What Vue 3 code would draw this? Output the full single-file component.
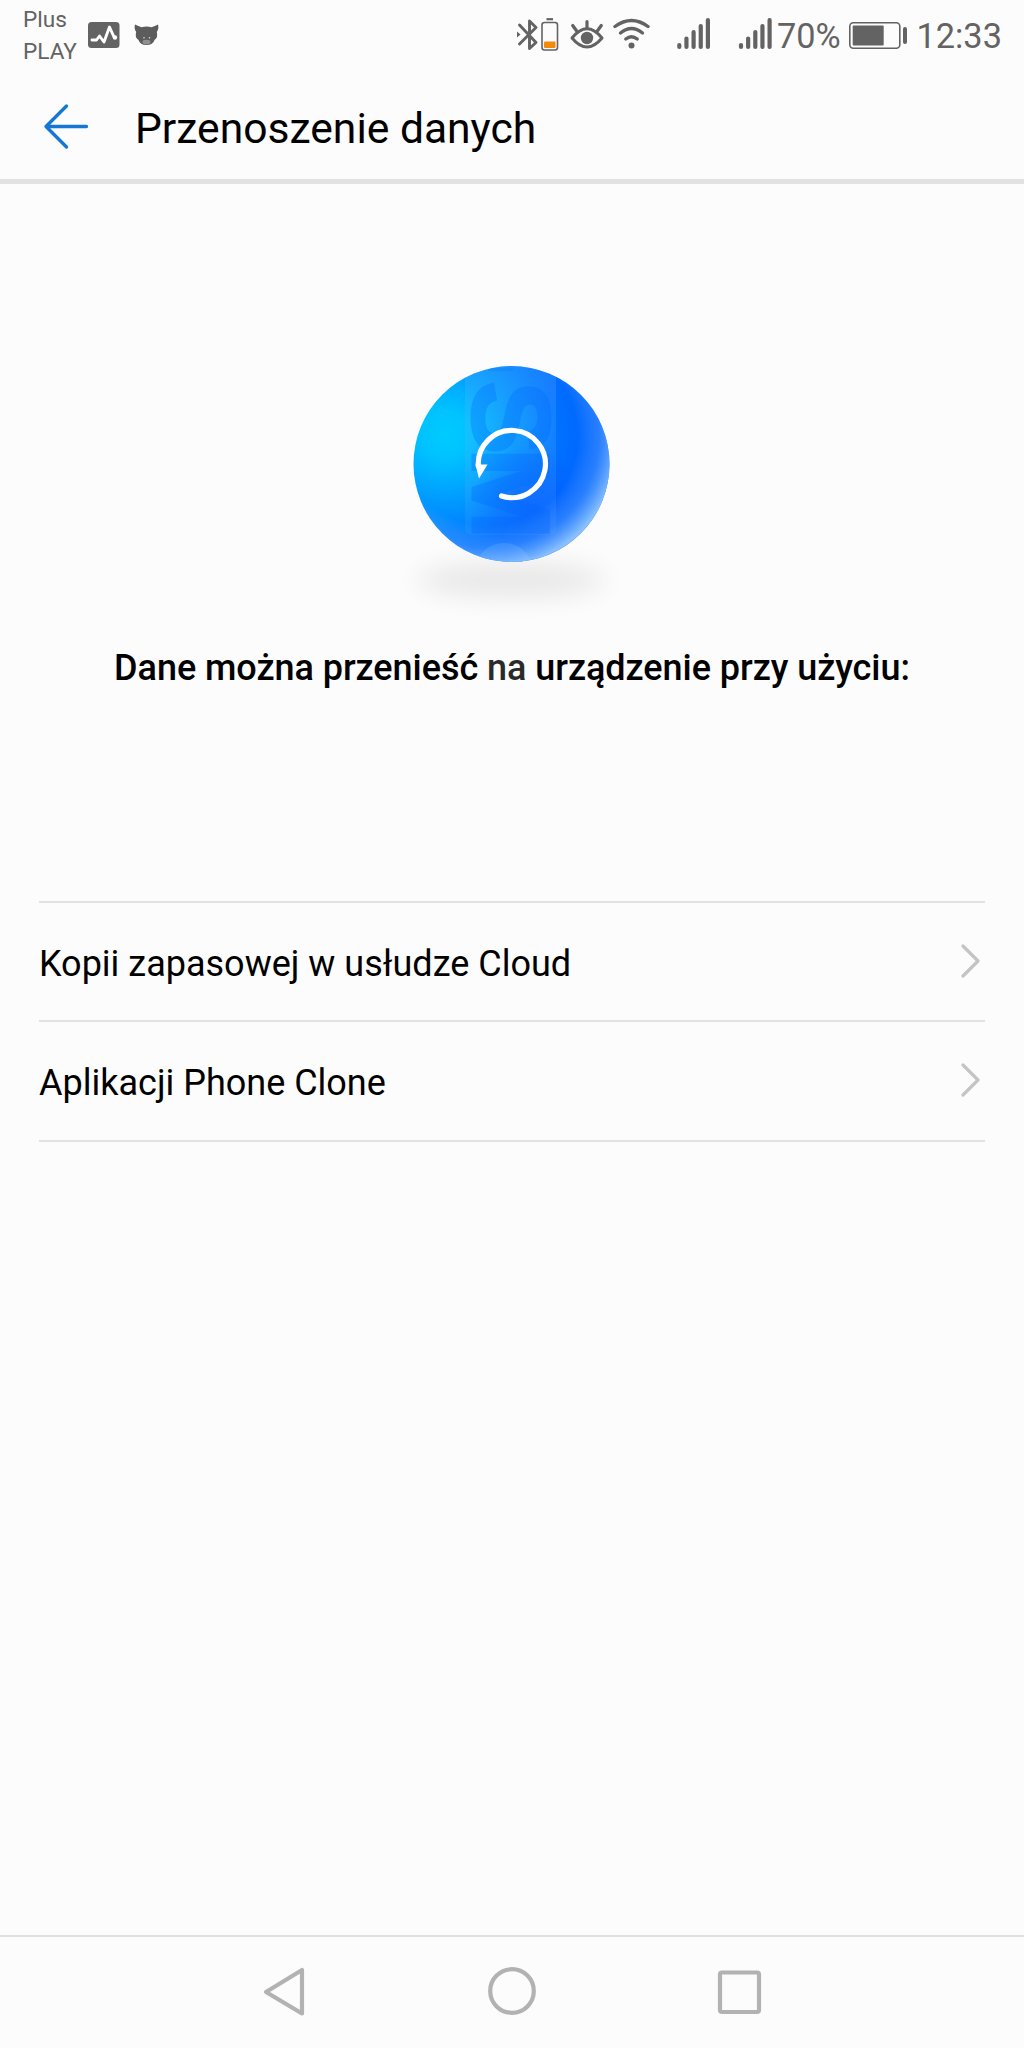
<template>
  <div class="screen">
    <!-- Status bar -->
    <div class="status-bar">
      <div class="carriers">
        <span>Plus</span>
        <span>PLAY</span>
      </div>
      <svg class="notifications" width="76" height="36" viewBox="86 16 76 36">
        <rect x="88" y="22" width="31.5" height="26" rx="3.5" fill="#636363" />
        <path
          d="M92 40h4.500l3-4 4.500 6 5.500-15 4.500 10"
          fill="none"
          stroke="#fff"
          stroke-width="2.900"
          stroke-linecap="round"
          stroke-linejoin="round"
        />
        <circle cx="115" cy="37.500" r="2.200" fill="#fff" />
        <path
          d="M135 24.500q3.500 1.800 6.500 2.800 5-1.400 10 0 3.500-1 6.500-2.800 1.200 4-1.200 7.500 1.500 5-2.300 8-1.500 5-8 5-6.500 0-8-5-4-3-2.300-8-2.400-3.500-1.200-7.500z"
          fill="#5c5c5c"
        />
        <ellipse cx="146.500" cy="42" rx="4" ry="2.300" fill="#909090" />
        <path d="M144 37v1.500M149.500 37v1.500" stroke="#ccc" stroke-width="1.300" />
      </svg>

      <div class="indicators">
        <svg width="258" height="40" viewBox="514 14 258 40" fill="none" stroke="#636363">
          <!-- Bluetooth -->
          <path
            d="M519.500 25L536 42.500 529.500 48.500V21L536 27.500 519.500 44"
            stroke-width="2.900"
            stroke-linecap="round"
            stroke-linejoin="round"
          />
          <path d="M517 31.500l3.500 3-3.500 3z" fill="#636363" stroke="none" />
          <!-- Accessory battery -->
          <rect x="542" y="22.500" width="15.500" height="27.500" rx="2.500" stroke-width="1.600" />
          <path d="M546.500 19.200h6.500" stroke-width="2.200" />
          <rect x="544" y="41.500" width="11.500" height="6.500" rx="1" fill="#f28a0c" stroke="none" />
          <!-- Eye comfort -->
          <path d="M572 38q15-18.500 30 0-15 18-30 0z" stroke-width="3" stroke-linejoin="round" />
          <circle cx="587" cy="38" r="6.200" fill="#636363" stroke="none" />
          <path
            d="M587 21.500v6M572.700 25.500l3.800 5.300M601.300 25.500l-3.800 5.300"
            stroke-width="3.200"
            stroke-linecap="round"
          />
          <!-- Wi-Fi -->
          <g stroke-width="3.400" stroke-linecap="round">
            <path d="M615 26.500q16.500-12 33 0" />
            <path d="M620.500 33q11-9 22 0" />
            <path d="M625.800 39q5.700-4.600 11.400 0" />
          </g>
          <circle cx="631.500" cy="45.500" r="3" fill="#636363" stroke="none" />
          <!-- Mobile signal -->
          <g v-for="x in signals" :key="x" stroke-width="4.200" stroke-linecap="round">
            <path
              v-for="(top, i) in signalTops"
              :key="i"
              :d="`M${x + i * 7.15} ${top}V47`"
            />
          </g>
        </svg>
        <span class="percent">70%</span>
        <svg class="battery" width="60" height="30" viewBox="848 20 60 30">
          <rect
            x="849.800"
            y="22.800"
            width="50"
            height="25.500"
            rx="3.500"
            fill="none"
            stroke="#636363"
            stroke-width="1.600"
          />
          <rect x="852.700" y="25.500" width="31" height="20" rx="1" fill="#636363" />
          <path d="M905 29v13" stroke="#636363" stroke-width="4" stroke-linecap="round" />
        </svg>
        <span class="clock">12:33</span>
      </div>
    </div>

    <!-- Header -->
    <header class="header">
      <button class="back-btn" aria-label="Wstecz">
        <svg
          width="48"
          height="48"
          viewBox="0 0 48 48"
          fill="none"
          stroke="#1577d4"
          stroke-width="3.300"
          stroke-linecap="round"
          stroke-linejoin="round"
        >
          <path d="M24.500 4L4 24.500l20.500 20.500M4 24.500h40.500" />
        </svg>
      </button>
      <h1>Przenoszenie danych</h1>
    </header>

    <!-- Illustration -->
    <main class="content">
      <svg class="ball" width="260" height="280" viewBox="380 340 260 280">
        <defs>
          <radialGradient id="base" gradientUnits="userSpaceOnUse" cx="445" cy="434" r="155">
            <stop offset="0" stop-color="#00cbff" />
            <stop offset="0.160" stop-color="#00c2ff" />
            <stop offset="0.450" stop-color="#0098ff" />
            <stop offset="0.740" stop-color="#0070ff" />
            <stop offset="1" stop-color="#0062ff" />
          </radialGradient>
          <radialGradient id="deep" gradientUnits="userSpaceOnUse" cx="532" cy="506" r="62">
            <stop offset="0" stop-color="#005cff" stop-opacity="0.850" />
            <stop offset="1" stop-color="#005cff" stop-opacity="0" />
          </radialGradient>
          <radialGradient id="rim" gradientUnits="userSpaceOnUse" cx="488" cy="436" r="132">
            <stop offset="0.680" stop-color="#78b4ff" stop-opacity="0" />
            <stop offset="0.840" stop-color="#62a8ff" stop-opacity="0.400" />
            <stop offset="1" stop-color="#8fc4ff" stop-opacity="0.950" />
          </radialGradient>
          <linearGradient id="panel" x1="0" y1="0" x2="0" y2="1">
            <stop offset="0" stop-color="#6ab4ff" stop-opacity="0.240" />
            <stop offset="1" stop-color="#6ab4ff" stop-opacity="0.120" />
          </linearGradient>
          <clipPath id="disc">
            <circle cx="511.500" cy="464" r="98" />
          </clipPath>
          <filter id="soft" x="-40%" y="-150%" width="180%" height="400%">
            <feGaussianBlur stdDeviation="14 13" />
          </filter>
        </defs>
        <ellipse cx="511" cy="580" rx="94" ry="18" fill="#000" opacity="0.080" filter="url(#soft)" />
        <g clip-path="url(#disc)">
          <rect x="410" y="360" width="204" height="204" fill="url(#base)" />
          <rect x="410" y="360" width="204" height="204" fill="url(#deep)" />
          <rect x="410" y="360" width="204" height="204" fill="url(#rim)" />
          <rect x="465" y="350" width="91" height="185" rx="7" fill="url(#panel)" />
          <path d="M488 368h25v3h-25z" fill="#0078f0" opacity="0.250" />
          <g class="ghost" fill="#0068fa" stroke="#0068fa" stroke-width="3" opacity="0.300">
            <text transform="translate(473 381) rotate(90)" textLength="66">S</text>
            <text transform="translate(473 448) rotate(90)" textLength="90">M</text>
          </g>
          <ellipse cx="504" cy="567" rx="27" ry="24" fill="#b4dcff" opacity="0.150" />
        </g>
        <path
          d="M478.300 466A33.600 33.600 0 1 1 501.500 496"
          fill="none"
          stroke="#fff"
          stroke-width="5.200"
          stroke-linecap="round"
        />
        <path d="M475.500 464.500h12l-8.500 14z" fill="#fff" />
      </svg>

      <p class="caption">Dane można przenieść <span>na</span> urządzenie przy użyciu:</p>

      <ul class="options">
        <li v-for="option in options" :key="option">
          <span>{{ option }}</span>
          <svg
            width="24"
            height="40"
            viewBox="0 0 24 40"
            fill="none"
            stroke="#c4c4c4"
            stroke-width="3.200"
            stroke-linecap="round"
            stroke-linejoin="round"
          >
            <path d="M2 4L17 19 2 34" />
          </svg>
        </li>
      </ul>
    </main>

    <!-- System navigation -->
    <nav class="nav-bar">
      <svg width="60" height="60" viewBox="254 1961 60 60">
        <path d="M302 1970v43.500L266 1992z" />
      </svg>
      <svg width="60" height="60" viewBox="482 1961 60 60">
        <circle cx="512" cy="1991" r="21.800" />
      </svg>
      <svg width="60" height="60" viewBox="710 1961 60 60">
        <rect x="720" y="1972.500" width="39" height="39.500" rx="2" />
      </svg>
    </nav>
  </div>
</template>

<script setup>
const options = ['Kopii zapasowej w usłudze Cloud', 'Aplikacji Phone Clone']

// Left edge of each signal meter and the top of its bars
const signals = [679.3, 741]
const signalTops = [45, 38.5, 32, 26, 20]
</script>

<style>
body {
  background: #fcfcfc;
}
</style>

<style scoped>
.screen {
  display: flex;
  flex-direction: column;
  width: 1024px;
  height: 2048px;
  overflow: hidden;
  background: #fcfcfc;
  color: #000;
  font-family: Roboto, sans-serif;
}

/* Status bar */
.status-bar {
  display: flex;
  align-items: flex-start;
  height: 72px;
  color: #636363;
  flex: none;
}

.carriers {
  display: flex;
  flex-direction: column;
  width: 63px;
  padding: 4px 0 0 23px;
  font-size: 22.6px;
  line-height: 31.5px;
}

.notifications {
  margin-top: 16px;
}

.indicators {
  display: flex;
  align-items: flex-start;
  margin-left: 352px;
  padding-top: 14px;
}

.percent,
.clock {
  font-size: 34.3px;
  line-height: 44px;
  white-space: nowrap;
}

.percent {
  width: 71px;
  margin-left: 5px;
}

.battery {
  margin-top: 6px;
}

.clock {
  margin-left: 8.5px;
}

/* Header */
.header {
  display: flex;
  align-items: center;
  height: 107px;
  padding: 0 42px;
  border-bottom: 5px solid #e2e2e2;
  flex: none;
}

.back-btn {
  display: flex;
  padding: 0;
  border: none;
  background: none;
  cursor: pointer;
}

.header h1 {
  margin: 4px 0 0 45px;
  font-size: 42.6px;
  font-weight: 400;
  line-height: 50px;
}

/* Content */
.content {
  display: flex;
  flex: 1;
  flex-direction: column;
  align-items: center;
}

.ball {
  margin: 156px 4px 0 0;
}

.ghost {
  font-family: 'Liberation Sans', sans-serif;
  font-size: 110px;
  font-weight: 700;
}

.caption {
  margin: 25px 0 0;
  font-size: 36px;
  font-weight: 500;
  line-height: 46px;
  letter-spacing: -0.05px;
  white-space: nowrap;
}

.caption span {
  color: #2a2a2a;
}

.options {
  width: 946px;
  margin: 210px 0 0;
  padding: 0;
  border-top: 2px solid #e2e2e2;
  list-style: none;
}

.options li {
  display: flex;
  align-items: center;
  justify-content: space-between;
  height: 117px;
  border-bottom: 2px solid #e2e2e2;
  font-size: 36px;
}

.options li:last-child {
  height: 118px;
}

.options li span {
  padding-top: 4px;
}

/* System navigation */
.nav-bar {
  display: flex;
  justify-content: center;
  gap: 168px;
  height: 111px;
  border-top: 2px solid #e0e0e0;
  flex: none;
}

.nav-bar svg {
  margin-top: 24px;
  fill: none;
  stroke: #b2b2b2;
  stroke-width: 4.2;
  stroke-linejoin: round;
}
</style>
